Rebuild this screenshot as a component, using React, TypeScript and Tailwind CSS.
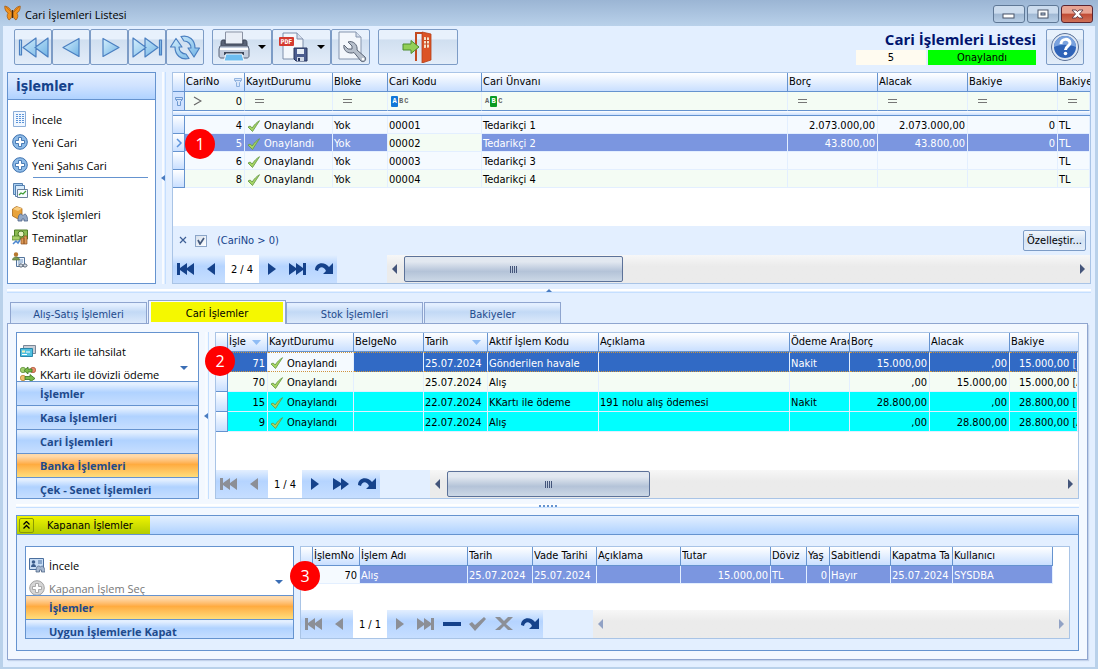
import type { ReactNode } from 'react'
import clsx from 'clsx'

interface Column {
  title: string
  width: string
  right?: boolean
  indent?: boolean
  sort?: boolean
  filter?: ReactNode
}

interface Row {
  cells: string[]
  tone: string
  current?: boolean
  cellTone?: Record<number, string>
}

const LIGHT = 'bg-[#f5faff] border-[#e3efff]'
const MINT = 'bg-[#f4fcf4] border-[#e3efff]'
const SELECTED = 'bg-[#7b96e0] border-[#e3efff] text-white'
const FOCUSED = 'bg-[#316ac5] border-[#e3efff] text-white'
const CYAN = 'bg-[#00ffff] border-[#e3efff]'
const LIGHT_CELL = 'bg-[#f5faff] border-[#e3efff] text-black'
const MINT_CELL = 'bg-[#f4fcf4] border-[#e3efff] text-black'

const equals = (
  <svg width="9" height="5" viewBox="0 0 9 5" className="ml-2">
    <path d="M0 .5h9M0 3.500h9" stroke="#777" />
  </svg>
)

const accountColumns: Column[] = [
  { title: 'CariNo', width: 'w-[60px]', right: true, filter: <GreaterThan /> },
  { title: 'KayıtDurumu', width: 'w-[88px]', filter: equals },
  { title: 'Bloke', width: 'w-[55px]', filter: equals },
  { title: 'Cari Kodu', width: 'w-[94px]', filter: <AbcBadge mark={0} /> },
  { title: 'Cari Ünvanı', width: '', filter: <AbcBadge mark={1} /> },
  { title: 'Borç', width: 'w-[90px]', right: true, filter: equals },
  { title: 'Alacak', width: 'w-[90px]', right: true, filter: equals },
  { title: 'Bakiye', width: 'w-[90px]', right: true, filter: equals },
  { title: 'Bakiye', width: 'w-8', filter: equals },
]

const accountRows: Row[] = [
  { tone: LIGHT, cells: ['4', 'Onaylandı', 'Yok', '00001', 'Tedarikçi 1', '2.073.000,00', '2.073.000,00', '0', 'TL'] },
  {
    tone: SELECTED,
    current: true,
    cellTone: { 3: MINT_CELL },
    cells: ['5', 'Onaylandı', 'Yok', '00002', 'Tedarikçi 2', '43.800,00', '43.800,00', '0', 'TL'],
  },
  { tone: LIGHT, cells: ['6', 'Onaylandı', 'Yok', '00003', 'Tedarikçi 3', '', '', '', 'TL'] },
  { tone: MINT, cells: ['8', 'Onaylandı', 'Yok', '00004', 'Tedarikçi 4', '', '', '', 'TL'] },
]

const movementColumns: Column[] = [
  { title: 'İşle', width: 'w-[40px]', right: true, sort: true },
  { title: 'KayıtDurumu', width: 'w-[86px]' },
  { title: 'BelgeNo', width: 'w-[70px]' },
  { title: 'Tarih', width: 'w-[64px]', sort: true },
  { title: 'Aktif İşlem Kodu', width: 'w-[111px]' },
  { title: 'Açıklama', width: '' },
  { title: 'Ödeme Arac', width: 'w-[60px]' },
  { title: 'Borç', width: 'w-[80px]', right: true },
  { title: 'Alacak', width: 'w-[80px]', right: true },
  { title: 'Bakiye', width: 'w-[68px]', indent: true },
]

const movementRows: Row[] = [
  {
    tone: FOCUSED,
    cellTone: { 1: LIGHT_CELL },
    cells: ['71', 'Onaylandı', '', '25.07.2024', 'Gönderilen havale', '', 'Nakit', '15.000,00', ',00', '15.000,00 [B'],
  },
  { tone: MINT, cells: ['70', 'Onaylandı', '', '25.07.2024', 'Alış', '', '', ',00', '15.000,00', '15.000,00 [A'] },
  { tone: CYAN, cells: ['15', 'Onaylandı', '', '22.07.2024', 'KKartı ile ödeme', '191 nolu alış ödemesi', 'Nakit', '28.800,00', ',00', '28.800,00 [B'] },
  { tone: CYAN, cells: ['9', 'Onaylandı', '', '22.07.2024', 'Alış', '', '', ',00', '28.800,00', '28.800,00 [A'] },
]

const closedColumns: Column[] = [
  { title: 'İşlemNo', width: 'w-[47px]', right: true },
  { title: 'İşlem Adı', width: 'w-[108px]' },
  { title: 'Tarih', width: 'w-[65px]' },
  { title: 'Vade Tarihi', width: 'w-[64px]' },
  { title: 'Açıklama', width: 'w-[84px]' },
  { title: 'Tutar', width: 'w-[90px]', right: true },
  { title: 'Döviz', width: 'w-[36px]' },
  { title: 'Yaş', width: 'w-[23px]', right: true },
  { title: 'Sabitlendi', width: 'w-[61px]' },
  { title: 'Kapatma Ta', width: 'w-[62px]' },
  { title: 'Kullanıcı', width: 'w-[100px]' },
]

const closedRows: Row[] = [
  {
    tone: SELECTED,
    cellTone: { 0: LIGHT_CELL },
    cells: ['70', 'Alış', '25.07.2024', '25.07.2024', '', '15.000,00', 'TL', '0', 'Hayır', '25.07.2024', 'SYSDBA'],
  },
]

export default function App() {
  return (
    <div className="flex min-h-screen flex-col overflow-hidden bg-[#b9d1ea] font-['DejaVu_Sans_Condensed','DejaVu_Sans',sans-serif] text-[11px] leading-none text-black">
      <TitleBar />
      <main className="mx-[3px] mb-[2px] flex flex-1 flex-col bg-[#e3efff]">
        <Toolbar />
        <section className="relative flex px-1">
          <ActionPanel />
          <VerticalSplitter className="w-4" />
          <div className="flex min-w-0 flex-1 flex-col border border-[#a9c4e6] bg-white">
            <DataGrid columns={accountColumns} rows={accountRows} rowHeight="h-[18px]" filterRow />
            <div className="min-h-[38px] flex-1" />
            <FilterPanel />
            <GridFooter label="2 / 4" atStart={false} thumb="w-[219px]" />
          </div>
          <StepBadge number={1} className="left-[182px] top-[57px]" />
        </section>
        <HorizontalSplitter className="mx-1 h-4 pt-[5px]" arrow />
        <Tabs />
        <section className="relative mr-[7px] mb-[7px] ml-1 flex flex-1 flex-col border border-t-0 border-[#8fa5cf] bg-[#f3f8ff] px-2 pt-2 pb-2 shadow-[1px_1px_1px_#c3d2ea]">
          <div className="relative flex">
            <BankPanel />
            <VerticalSplitter className="w-4" />
            <div className="flex min-w-0 flex-1 flex-col border border-[#a9c4e6] bg-white">
              <DataGrid columns={movementColumns} rows={movementRows} rowHeight="h-[20px]" dottedFirst />
              <div className="min-h-[38px] flex-1" />
              <GridFooter label="1 / 4" atStart thumb="w-[203px]" fast />
            </div>
            <StepBadge number={2} className="left-[189px] top-[14px]" />
          </div>
          <HorizontalSplitter className="h-4 pt-[5px]" />
          <ClosedPanel />
        </section>
      </main>
    </div>
  )
}

function TitleBar() {
  return (
    <header className="flex h-[26px] items-center bg-linear-to-b from-[#9bb5d4] to-[#b9d1ea] pl-1 pr-[5px]">
      <Butterfly />
      <h1 className="ml-[4px] flex-1 pt-[3px] font-['Open_Sans',sans-serif] text-[11px]">Cari İşlemleri Listesi</h1>
      <div className="flex gap-[2px] pt-[2px]">
        <WindowButton label="Simge durumuna küçült">
          <rect x="9" y="8" width="11" height="4" fill="#fff" stroke="#4a5468" />
        </WindowButton>
        <WindowButton label="Ekranı kapla">
          <rect x="10" y="4" width="10" height="8" fill="#fff" stroke="#4a5468" />
          <rect x="13" y="7" width="4" height="2" fill="#b3c6de" stroke="#4a5468" />
        </WindowButton>
        <WindowButton label="Kapat" close>
          <path d="M10 4h4l1.500 1.700L17 4h4l-3.500 4 3.500 4h-4l-1.500-1.700L14 12h-4l3.500-4z" fill="#fff" stroke="#5c3a44" strokeWidth=".9" />
        </WindowButton>
      </div>
    </header>
  )
}

function WindowButton({ label, close, children }: { label: string; close?: boolean; children: ReactNode }) {
  return (
    <button
      aria-label={label}
      className={clsx(
        'h-[18px] w-8 rounded-[3px] border',
        close
          ? 'border-[#5b2430] bg-linear-to-b from-[#e8a493] from-45% via-[#c04a34] via-50% to-[#cf7058]'
          : 'border-[#5f7896] bg-linear-to-b from-[#ccdcee] from-45% via-[#a0b8d3] via-50% to-[#b8cee6]',
      )}
    >
      <svg width="30" height="16" viewBox="0 0 30 16">{children}</svg>
    </button>
  )
}

function Toolbar() {
  return (
    <div className="flex items-start pt-[3px] pr-[11px] pb-[7px] pl-[11px]">
      <div className="flex">
        <ToolButton label="İlk kayıt" width="w-[38px]">
          <BlueShape d="M2.500 8h2v15h-2zM19 6v19L6 15.500zM31 6v19l-13-9.500z" />
        </ToolButton>
        <ToolButton label="Önceki kayıt" width="w-[38px]">
          <BlueShape d="M24 6.500v18L8 15.500z" />
        </ToolButton>
        <ToolButton label="Sonraki kayıt" width="w-[38px]">
          <BlueShape d="M10 6.500v18l16-9z" />
        </ToolButton>
        <ToolButton label="Son kayıt" width="w-[38px]">
          <BlueShape d="M28.500 8h2v15h-2zM14 6v19l13-9.500zM2 6v19l13-9.500z" />
        </ToolButton>
        <ToolButton label="Yenile" width="w-[38px]">
          <BlueShape d="M6 15H1.500L7 6.500 13 15H10c0 4 3 7 7 7l3 4.500C12 28.500 6 23 6 15zM26 16h4.500L25 25l-6-9h3c0-4-3-7-7-7l-3-4.500C20 2.500 26 8 26 16z" />
        </ToolButton>
      </div>
      <div className="ml-2 flex">
        <ToolButton label="Yazdır" width="w-[60px]" menu>
          <PrinterIcon />
        </ToolButton>
        <ToolButton label="PDF olarak kaydet" width="w-[59px]" menu>
          <PdfIcon />
        </ToolButton>
        <ToolButton label="Ayarlar" width="w-[39px]">
          <WrenchIcon />
        </ToolButton>
      </div>
      <div className="ml-2 flex flex-1">
        <ToolButton label="Çıkış" width="w-20">
          <DoorIcon />
        </ToolButton>
      </div>
      <div className="mr-[10px] w-[180px]">
        <h2 className="-ml-2 h-[21px] text-right font-['Open_Sans',sans-serif] text-[15px] leading-[20px] font-bold whitespace-nowrap text-[#00146e]">
          Cari İşlemleri Listesi
        </h2>
        <div className="flex h-[15px] gap-[2px] text-center leading-[16px]">
          <div className="w-[70px] bg-[#fffbf0]">5</div>
          <div className="flex-1 bg-[#00ff00]">Onaylandı</div>
        </div>
      </div>
      <ToolButton label="Yardım" width="w-[38px]">
        <HelpIcon />
      </ToolButton>
    </div>
  )
}

function ToolButton({ label, width, menu, children }: { label: string; width: string; menu?: boolean; children: ReactNode }) {
  return (
    <button
      aria-label={label}
      className={clsx(
        'flex h-9 items-center justify-center rounded-[2px] border border-[#7d9cc6] bg-linear-to-b from-[#e8f1fc] from-25% via-[#d0dff0] via-30% to-[#e3edf9]',
        width,
      )}
    >
      {children}
      {menu && (
        <svg width="8" height="4" viewBox="0 0 8 4" className="ml-2">
          <path d="M0 0h8L4 4z" fill="#000" />
        </svg>
      )}
    </button>
  )
}

function ActionPanel() {
  return (
    <aside className="flex w-[149px] shrink-0 flex-col border border-[#6593cf] bg-white">
      <h3 className="flex h-[27px] items-center border-b border-[#6593cf] bg-linear-to-b from-[#e3efff] via-[#cfe2ff] to-[#afd2ff] pl-2 text-[14px] font-bold text-[#15428b]">
        İşlemler
      </h3>
      <nav className="flex flex-col px-1 pt-[7px] font-['Open_Sans',sans-serif]">
        <ActionItem icon={<ListIcon />}>İncele</ActionItem>
        <ActionItem icon={<PlusIcon />}>Yeni Cari</ActionItem>
        <ActionItem icon={<PlusIcon />}>Yeni Şahıs Cari</ActionItem>
        <hr className="mt-[1px] mr-[3px] mb-[1px] ml-[21px] border-[#6593cf]" />
        <ActionItem icon={<RiskIcon />}>Risk Limiti</ActionItem>
        <ActionItem icon={<StockIcon />}>Stok İşlemleri</ActionItem>
        <ActionItem icon={<MoneyIcon />}>Teminatlar</ActionItem>
        <ActionItem icon={<LinkIcon />}>Bağlantılar</ActionItem>
      </nav>
    </aside>
  )
}

function ActionItem({ icon, disabled, children }: { icon: ReactNode; disabled?: boolean; children: ReactNode }) {
  return (
    <button disabled={disabled} className={clsx('flex h-[23px] shrink-0 items-center gap-1 whitespace-nowrap', disabled && 'text-[#777]')}>
      {icon}
      <span className="pt-[2px]">{children}</span>
    </button>
  )
}

function BankPanel() {
  return (
    <aside className="relative flex w-[183px] shrink-0 flex-col border border-[#6593cf] bg-white">
      <div className="flex h-12 flex-col overflow-hidden pt-[6px] pl-[3px] font-['Open_Sans',sans-serif]">
        <ActionItem icon={<CardsIcon />}>KKartı ile tahsilat</ActionItem>
        <ActionItem icon={<SwapIcon />}>KKartı ile dövizli ödeme</ActionItem>
      </div>
      <MoreArrow className="top-[33px] right-[10px]" />
      <NavGroup>İşlemler</NavGroup>
      <NavGroup>Kasa İşlemleri</NavGroup>
      <NavGroup>Cari İşlemleri</NavGroup>
      <NavGroup active>Banka İşlemleri</NavGroup>
      <NavGroup last>Çek - Senet İşlemleri</NavGroup>
    </aside>
  )
}

function NavGroup({ active, last, children }: { active?: boolean; last?: boolean; children: ReactNode }) {
  return (
    <button
      className={clsx(
        "flex items-start border-t border-[#6593cf] pt-[5px] pl-[23px] text-left font-['Open_Sans',sans-serif] leading-[13px] font-bold text-[#1e4a8c]",
        last ? 'h-[19px] grow' : 'h-6',
        active
          ? 'bg-linear-to-b from-[#ffd9a8] from-10% via-[#ffab3f] via-45% to-[#ffdd7a]'
          : 'bg-linear-to-b from-[#e3efff] from-10% via-[#b0d2ff] via-45% to-[#c6deff]',
      )}
    >
      {children}
    </button>
  )
}

function MoreArrow({ className }: { className: string }) {
  return (
    <svg width="8" height="4" viewBox="0 0 8 4" className={clsx('absolute', className)}>
      <path d="M0 0h8L4 4z" fill="#3a6eb5" />
    </svg>
  )
}

function DataGrid({ columns, rows, rowHeight, filterRow, dottedFirst, trailing }: {
  columns: Column[]
  rows: Row[]
  rowHeight: string
  filterRow?: boolean
  dottedFirst?: boolean
  trailing?: boolean
}) {
  return (
    <table className="w-full table-fixed border-separate border-spacing-0 text-left">
      <thead>
        <tr>
          <th className="h-[19px] w-3 border-r border-b border-[#6593cf] bg-linear-to-b from-white to-[#c9dfff] p-0" />
          {columns.map((column, i) => (
            <th
              key={i}
              className={clsx(
                'overflow-hidden border-r border-b border-[#6593cf] bg-linear-to-b from-white to-[#c9dfff] p-0 pl-[1px] font-normal whitespace-nowrap',
                column.width,
                !trailing && i === columns.length - 1 && 'border-r-0',
              )}
            >
              <div className="flex items-center justify-between overflow-hidden leading-[14px]">
                {column.title}
                {column.sort && (
                  <svg width="9" height="5" viewBox="0 0 9 5" className="mr-[6px] shrink-0">
                    <path d="M0 0h9L4.500 5z" fill="#8fbcf5" />
                  </svg>
                )}
                {filterRow && i === 0 && <Funnel className="mr-[2px] opacity-70" />}
              </div>
            </th>
          ))}
          {trailing && <th className="p-0" />}
        </tr>
      </thead>
      <tbody>
        {filterRow && (
          <>
            <tr>
              <td className="h-[19px] border-r border-b border-[#6593cf] bg-[#cfe2ff] p-0 pl-[2px]">
                <Funnel />
              </td>
              {columns.map((column, i) => (
                <td key={i} className="border-r border-b border-r-[#e3efff] border-b-[#6593cf] bg-[#f4fcf4] p-0 pl-[2px]">
                  {column.filter}
                </td>
              ))}
            </tr>
            <tr>
              <td className="h-[5px] border-b border-[#6593cf] bg-linear-to-b from-white to-[#c9dfff] p-0" colSpan={columns.length + 1} />
            </tr>
          </>
        )}
        {rows.map((row, r) => (
          <tr key={r}>
            <td className={clsx('border-r border-b border-[#6593cf] bg-linear-to-b from-white to-[#c9dfff] p-0', rowHeight)}>
              {row.current && (
                <svg width="11" height="10" viewBox="0 0 11 10">
                  <path d="M4 1l4 4-4 4" fill="none" stroke="#5b93dc" strokeWidth="1.500" />
                </svg>
              )}
            </td>
            {row.cells.map((cell, i) => (
              <td
                key={i}
                className={clsx(
                  'overflow-hidden border-r border-b p-0 pt-[2px] pr-[2px] whitespace-nowrap',
                  columns[i].indent ? 'pl-[9px]' : 'pl-[1px]',
                  row.cellTone?.[i] ?? row.tone,
                  columns[i].right && 'text-right',
                  dottedFirst && r === 0 && 'border-t border-t-[#ce953a] border-b-[#ce953a] [border-top-style:dotted] [border-bottom-style:dotted]',
                )}
              >
                {columns[i].title === 'KayıtDurumu' ? (
                  <span className="flex items-center gap-[3px]">
                    <CheckIcon />
                    {cell}
                  </span>
                ) : (
                  cell
                )}
              </td>
            ))}
            {trailing && <td className="p-0" />}
          </tr>
        ))}
      </tbody>
    </table>
  )
}

function FilterPanel() {
  return (
    <div className="flex h-[29px] items-center bg-[#e3efff] pr-1 pl-[6px] text-[#15428b]">
      <button aria-label="Filtreyi kaldır">
        <svg width="9" height="9" viewBox="0 0 9 9">
          <path d="M1 1l6 6M7 1L1 7" stroke="#3d5f96" strokeWidth="1.200" />
        </svg>
      </button>
      <label className="flex items-center gap-[10px] pl-[7px]">
        <input
          type="checkbox"
          defaultChecked
          className="peer h-3 w-3 appearance-none border border-[#8ba5c8] bg-[linear-gradient(135deg,#d5dfec,#ffffff)]"
        />
        <svg width="8" height="8" viewBox="0 0 8 8" className="-ml-5 mr-[2px] hidden peer-checked:block">
          <path d="M1 3l2 4 4-6" fill="none" stroke="#44597c" strokeWidth="1.700" />
        </svg>
        (CariNo &gt; 0)
      </label>
      <div className="flex-1" />
      <button className="h-[21px] rounded-[2px] border border-[#7d9cc6] bg-linear-to-b from-[#f2f7fd] via-[#d5e3f4] to-[#e3edf9] px-[3px] text-black">
        Özelleştir...
      </button>
    </div>
  )
}

function GridFooter({ label, atStart, atEnd, thumb, fast, editing }: {
  label: string
  atStart: boolean
  atEnd?: boolean
  thumb?: string
  fast?: boolean
  editing?: boolean
}) {
  return (
    <div className="flex h-7 bg-[#e3efff]">
      <div className="flex bg-linear-to-b from-[#e3efff] from-0% via-[#b5d4ff] via-40% to-[#c6deff]">
        <NavButton label="İlk" disabled={atStart} d="M0 2h3v5l7-5v5l7-5v12l-7-5v5L3 9v5H0z" />
        <NavButton label="Önceki" disabled={atStart} d="M12 2v12L4 8z" />
        <div className="flex w-[34px] items-center justify-center bg-white">{label}</div>
        <NavButton label="Sonraki" disabled={atEnd} d="M5 2v12l8-6z" />
        <NavButton
          label="Son"
          disabled={atEnd}
          d={fast ? 'M1 2v12l8-5v5l8-6-8-6v5z' : 'M0 2v12l7-5v5l7-5v5h3V2h-3v5L7 2v5z'}
        />
        {editing && (
          <>
            <NavButton label="Sil" d="M0 6h18v4H0z" />
            <NavButton label="Kaydet" disabled d="M0 8l3-2 3 3L15 1l2 2L6 15z" />
            <NavButton label="Vazgeç" disabled d="M0 1h5l4 4 4-4h5l-7 7 7 6h-5l-4-4-4 4H0l7-6z" />
          </>
        )}
        <NavButton label="Yenile" d="M0 9C0 1 10 0 14 6l4-4v11H8l3-3C9 5 4 5 3 10z" />
      </div>
      <div className="w-[50px] shrink-0" />
      <div className="flex min-w-0 flex-1 items-center bg-linear-to-b from-[#f7f7f7] to-[#ebebeb] to-40% px-1">
        <svg width="6" height="10" viewBox="0 0 6 10" className="shrink-0">
          <path d="M6 0v10L1 5z" fill={thumb ? '#44557a' : '#91a2c5'} />
        </svg>
        {thumb && (
          <div
            className={clsx(
              'ml-[7px] flex h-[26px] items-center justify-center gap-[1px] rounded-[2px] border border-[#5c7299] bg-linear-to-b from-[#e2e8f0] from-20% via-[#b4c3d8] via-60% to-[#ccd8e6]',
              thumb,
            )}
          >
            <i className="h-[7px] w-px bg-[#44557a]" />
            <i className="h-[7px] w-px bg-[#44557a]" />
            <i className="h-[7px] w-px bg-[#44557a]" />
            <i className="h-[7px] w-px bg-[#44557a]" />
          </div>
        )}
        <div className="flex-1" />
        <svg width="6" height="10" viewBox="0 0 6 10" className="shrink-0">
          <path d="M0 0v10l5-5z" fill={thumb ? '#44557a' : '#91a2c5'} />
        </svg>
      </div>
    </div>
  )
}

function NavButton({ label, disabled, d }: { label: string; disabled?: boolean; d: string }) {
  return (
    <button aria-label={label} disabled={disabled} className="flex w-[26px] items-center justify-center">
      <svg width="18" height="16" viewBox="0 0 18 16">
        <path d={d} fill={disabled ? '#8c8f96' : '#15428b'} />
      </svg>
    </button>
  )
}

function Tabs() {
  return (
    <div className="mr-[7px] ml-1 flex items-end">
      <div className="w-[3px] self-stretch border-b border-[#8fa5cf]" />
      <Tab>Alış-Satış İşlemleri</Tab>
      <Tab active>Cari İşlemler</Tab>
      <Tab>Stok İşlemleri</Tab>
      <Tab>Bakiyeler</Tab>
      <div className="flex-1 border-b border-[#8fa5cf]" />
    </div>
  )
}

function Tab({ active, children }: { active?: boolean; children: ReactNode }) {
  if (active) {
    return (
      <div className="h-6 border border-b-0 border-[#8fa5cf] bg-[#f3f8ff] px-[2px] pt-[1px]">
        <button className="h-5 w-[132px] bg-[#f5f800] pt-[2px]">{children}</button>
      </div>
    )
  }
  return (
    <div className="h-[22px] border-b border-[#8fa5cf] pr-[1px]">
      <button className="h-[21px] w-[137px] border border-b-0 border-[#8fa5cf] bg-linear-to-b from-[#e3efff] from-10% via-[#c2d9f5] via-45% to-[#dce9fb] pt-[2px] text-[#1e4a8c]">
        {children}
      </button>
    </div>
  )
}

function ClosedPanel() {
  return (
    <section className="relative flex flex-1 flex-col border border-[#6593cf] bg-[#e3efff]">
      <header className="flex h-[19px] border-b border-[#6593cf] bg-linear-to-b from-[#e3efff] to-[#afd2ff]">
        <div className="flex w-[133px] items-center bg-linear-to-b from-[#f0f400] to-[#b3cc00] pl-[2px]">
          <button aria-label="Daralt" className="flex h-[15px] w-[15px] items-center justify-center rounded-[2px] border border-[#8a9a00]">
            <svg width="7" height="8" viewBox="0 0 7 8">
              <path d="M.5 3.500l3-3 3 3M.5 7.500l3-3 3 3" fill="none" stroke="#000" strokeWidth="1.300" />
            </svg>
          </button>
          <span className="pl-[13px]">Kapanan İşlemler</span>
        </div>
      </header>
      <div className="flex flex-1 px-2 py-[11px]">
        <aside className="relative flex w-[269px] shrink-0 flex-col border border-[#6593cf] bg-white">
          <div className="flex h-12 flex-col overflow-hidden pt-[6px] pl-[3px] font-['Open_Sans',sans-serif]">
            <ActionItem icon={<CustomerIcon />}>İncele</ActionItem>
            <ActionItem icon={<PlusIcon muted />} disabled>Kapanan İşlem Seç</ActionItem>
          </div>
          <MoreArrow className="top-[33px] right-[10px]" />
          <NavGroup active>İşlemler</NavGroup>
          <NavGroup last>Uygun İşlemlerle Kapat</NavGroup>
        </aside>
        <div className="ml-[6px] flex min-w-0 flex-1 flex-col border border-[#a9c4e6] bg-white">
          <DataGrid columns={closedColumns} rows={closedRows} rowHeight="h-[18px]" trailing />
          <div className="flex-1" />
          <GridFooter label="1 / 1" atStart atEnd editing />
        </div>
      </div>
      <StepBadge number={3} className="left-[273px] top-[45px]" />
    </section>
  )
}

function VerticalSplitter({ className }: { className: string }) {
  return (
    <div className={clsx('flex shrink-0 items-center justify-center', className)}>
      <div className="flex h-full w-1 items-center justify-end border-r border-l-2 border-r-[#c5dfff] border-l-[#f8fbff]">
        <svg width="4" height="6" viewBox="0 0 4 6" className="shrink-0">
          <path d="M4 0v6L0 3z" fill="#4a7cc0" />
        </svg>
      </div>
    </div>
  )
}

function HorizontalSplitter({ className, arrow }: { className: string; arrow?: boolean }) {
  return (
    <div className={className}>
      <div className="flex h-1 items-end justify-center gap-[2px] border-t-2 border-b border-t-white border-b-[#c5dfff]">
        {arrow ? (
          <svg width="6" height="3" viewBox="0 0 6 3" className="shrink-0">
            <path d="M0 3h6L3 0z" fill="#4a7cc0" />
          </svg>
        ) : (
          [0, 1, 2, 3, 4].map(i => <i key={i} className="h-[2px] w-[2px] shrink-0 bg-[#6593cf]" />)
        )}
      </div>
    </div>
  )
}

function StepBadge({ number, className }: { number: number; className: string }) {
  return (
    <span
      className={clsx(
        "absolute flex h-[30px] w-[30px] items-center justify-center rounded-full bg-[#ff0000] font-['Open_Sans',sans-serif] text-base text-white",
        className,
      )}
    >
      {number}
    </span>
  )
}

function GreaterThan() {
  return (
    <div className="flex items-center justify-between pr-[2px] pl-[6px]">
      <svg width="9" height="10" viewBox="0 0 9 10">
        <path d="M1 1l7 4-7 4" fill="none" stroke="#666" strokeWidth="1.200" />
      </svg>
      0
    </div>
  )
}

function AbcBadge({ mark }: { mark: number }) {
  return (
    <span className="flex items-center gap-[1px] pl-[1px] font-['Liberation_Mono',monospace] text-[7px] font-bold text-[#666]">
      {['A', 'B', 'C'].map((letter, i) => (
        <span
          key={letter}
          className={clsx(i === mark && 'flex h-[11px] w-[7px] items-center justify-center rounded-[1px] text-white', i === mark && (mark === 0 ? 'bg-[#1277d8]' : 'bg-[#0a9b22]'))}
        >
          {letter}
        </span>
      ))}
    </span>
  )
}

function Funnel({ className }: { className?: string }) {
  return (
    <svg width="8" height="9" viewBox="0 0 8 9" className={className}>
      <path d="M.5 .5h7v2l-2 2v4h-3v-4l-2-2z" fill="#d5e4fa" stroke="#6f9ad2" />
      <path d="M1 2.500h6" stroke="#6f9ad2" />
    </svg>
  )
}

function CheckIcon() {
  return (
    <svg width="14" height="12" viewBox="0 0 14 12" className="ml-[1px] shrink-0">
      <path d="M1 7l2.200-1L5.200 8C7 5 9.500 2.500 12.500 .7 10.500 4 8 7.500 5.500 11.500z" fill="#a5d564" stroke="#6b9c48" strokeWidth=".9" strokeLinejoin="round" />
    </svg>
  )
}

function BlueShape({ d }: { d: string }) {
  return (
    <svg width="32" height="30" viewBox="0 0 32 30">
      <defs>
        <linearGradient id="blueGlass" x1="0" y1="0" x2="1" y2="1">
          <stop offset="0" stopColor="#d6f0fd" />
          <stop offset="1" stopColor="#6fb2e4" />
        </linearGradient>
      </defs>
      <path d={d} fill="url(#blueGlass)" stroke="#4a7fc0" strokeWidth="1.200" strokeLinejoin="round" />
    </svg>
  )
}

function Butterfly() {
  return (
    <svg width="17" height="16" viewBox="0 0 17 16">
      <path d="M8 8C7 4 4 1.500 .8 1c-.3 3 1 6 3.400 7C2.500 10 3 13 5 15c2-1 3-3 3-6zM9 8c1-4 4-6.500 7.200-7 .3 3-1 6-3.400 7 1.700 2 1.200 5-.8 7-2-1-3-3-3-6z" fill="#f2931d" stroke="#9c5510" strokeWidth=".7" />
      <path d="M2 2l5 5M15 2l-5 5" stroke="#c46a10" strokeWidth=".8" />
      <path d="M8.500 5v8" stroke="#4a2a0a" strokeWidth="1.200" />
    </svg>
  )
}

function PrinterIcon() {
  return (
    <svg width="32" height="32" viewBox="0 0 32 32">
      <path d="M7.500 1h17v14h-17z" fill="#e9eef6" stroke="#8b93a5" />
      <path d="M5 9c-2 0-2 2-2 4v2h26v-2c0-2 0-4-2-4h-2v4H7V9z" fill="#596377" stroke="#3c4456" />
      <path d="M2 15h28l1 3v7c0 1-1 2-2 2H3c-1 0-2-1-2-2v-7z" fill="#c3cddd" stroke="#596377" />
      <path d="M2 17h28v2H2z" fill="#fff" />
      <path d="M6 21h20v3H6z" fill="#3f485b" />
      <path d="M8 23h16l2 7H6z" fill="#6cbdf0" stroke="#f5f8fc" />
    </svg>
  )
}

function PdfIcon() {
  return (
    <svg width="31" height="32" viewBox="0 0 31 32">
      <path d="M5 2h14l6 6v20H5z" fill="#f3f7fc" stroke="#7f8fab" />
      <path d="M19 2v6h6" fill="#d5deeb" stroke="#7f8fab" />
      <rect x="1" y="6" width="15" height="9" rx="1" fill="#d43a2f" />
      <text x="2.500" y="13" fontSize="6.500" fontWeight="bold" fill="#fff" fontFamily="DejaVu Sans Mono">PDF</text>
      <path d="M16 17h13v13H18l-2-2z" fill="#4b5c8e" stroke="#27355c" />
      <path d="M19 18h7v5h-7z" fill="#e5ecf5" />
      <path d="M19 26h7v4h-7z" fill="#cfd8e6" />
      <path d="M20 27h2v3h-2z" fill="#27355c" />
    </svg>
  )
}

function WrenchIcon() {
  return (
    <svg width="32" height="32" viewBox="0 0 32 32">
      <path d="M4 1h17l5 5v22H4z" fill="#f3f7fc" stroke="#8595ae" />
      <path d="M21 1v5h5" fill="#d5deeb" stroke="#8595ae" />
      <path d="M13 11l4 4v3h-4l-4-4c-1 4 2 8 7 8 1 0 2 0 3-.5L26 30c3 2 6-1 4-4l-8-7c1-5-4-10-9-8z" fill="#b6bfcb" stroke="#5b6576" />
      <circle cx="28" cy="28" r="1.200" fill="#fff" />
    </svg>
  )
}

function DoorIcon() {
  return (
    <svg width="32" height="32" viewBox="0 0 32 32">
      <path d="M14 30V2h7" fill="none" stroke="#c24a20" strokeWidth="2" />
      <path d="M20 1l9 2v26l-9 3z" fill="#dc5425" stroke="#b53f16" strokeWidth=".8" />
      <path d="M22 6l5 .5v10l-5 .5z" fill="#f5e2c8" />
      <path d="M24.500 6v11M22 9.500h5M22 13h5" stroke="#c24a20" />
      <path d="M1 13h8V9.500l8 6.500-8 6.500V19H1z" fill="#92cf57" stroke="#4d8d2e" />
    </svg>
  )
}

function HelpIcon() {
  return (
    <svg width="32" height="32" viewBox="0 0 32 32">
      <circle cx="16" cy="16" r="13.500" fill="#2f63b8" stroke="#5f7191" />
      <circle cx="16" cy="16" r="12" fill="none" stroke="#dfe7f2" strokeWidth="2" />
      <path d="M5 16a11 11 0 0 1 22 0c-7-3-15-3-22 0z" fill="#7aa2de" />
      <path d="M12 13c0-6 9-6 9-1 0 3-4.500 3.500-4.500 7" fill="none" stroke="#fff" strokeWidth="3" />
      <circle cx="16.500" cy="22.500" r="1.800" fill="#fff" />
    </svg>
  )
}

function ListIcon() {
  return (
    <svg width="16" height="16" viewBox="0 0 16 16">
      <path d="M1.500 .5h12v15h-12z" fill="#f0f7ff" stroke="#8caed8" />
      <path d="M4 3.500h2m1 0h2m1 0h2M4 5.500h2m1 0h2m1 0h2M4 7.500h2m1 0h2m1 0h2M4 9.500h2m1 0h2m1 0h2M4 11.500h2m1 0h2m1 0h2" stroke="#5c94d8" />
    </svg>
  )
}

function PlusIcon({ muted }: { muted?: boolean }) {
  return (
    <svg width="16" height="16" viewBox="0 0 16 16">
      <circle cx="8" cy="8" r="7.300" fill={muted ? '#d5d5d5' : '#8fbce8'} stroke={muted ? '#a3a3a3' : '#3c70ae'} />
      <path d="M6.500 3.500h3v3h3v3h-3v3h-3v-3h-3v-3h3z" fill="#fff" stroke={muted ? '#a3a3a3' : '#3c70ae'} strokeWidth=".9" />
    </svg>
  )
}

function RiskIcon() {
  return (
    <svg width="16" height="16" viewBox="0 0 16 16">
      <path d="M1.500 .5h9v11h-9z" fill="#a9cff2" stroke="#5580b0" />
      <path d="M3.500 2.500h9v11h-9z" fill="#d9ecfc" stroke="#5580b0" />
      <path d="M5.500 6.500h10v8h-10z" fill="#f7fbff" stroke="#6b7f9a" />
      <path d="M7 12l2-2 2 1 3-3" fill="none" stroke="#3f9c35" strokeWidth="1.200" />
    </svg>
  )
}

function StockIcon() {
  return (
    <svg width="16" height="16" viewBox="0 0 16 16">
      <path d="M.5 3l4-2.500L10 2.500v8L6 13l-5.500-3z" fill="#e8a33c" stroke="#a86a1c" strokeWidth=".8" />
      <path d="M1 3l5 2 4-2.500-5-1.800z" fill="#f8cd82" />
      <path d="M6 15c0-4 1-7 2.500-7s2 1.500 2.500 1.500S12 8 13 8s2.700 3 2.700 7H12v-2h-2v2z" fill="#93a8c6" stroke="#4b6288" strokeWidth=".8" />
    </svg>
  )
}

function MoneyIcon() {
  return (
    <svg width="16" height="16" viewBox="0 0 16 16">
      <path d="M2.500 1h13v9h-13z" fill="#8cbc52" stroke="#4e7c26" />
      <circle cx="9" cy="5" r="3" fill="#e5f2bf" stroke="#4e7c26" />
      <path d="M0 7h8v4H0z" fill="#a9d06a" stroke="#4e7c26" strokeWidth=".7" />
      <path d="M1 15l3-3 2 2 2-3" fill="none" stroke="#4c86cf" strokeWidth="1.500" />
      <path d="M9 9h3v6H9zM12 7h3v8h-3z" fill="#dc9a58" stroke="#8d5220" strokeWidth=".7" />
    </svg>
  )
}

function LinkIcon() {
  return (
    <svg width="16" height="16" viewBox="0 0 16 16">
      <path d="M4.500 5.500h8v9h-8z" fill="#eef5fd" stroke="#54749c" />
      <path d="M6 8h5M6 10h5M6 12h3" stroke="#6f92bd" />
      <circle cx="4" cy="2.500" r="2.200" fill="#b8782e" />
      <path d="M.5 8c0-4 7-4 7 0z" fill="#7c9c50" stroke="#4d6630" strokeWidth=".6" />
      <path d="M7 13.500c0-2 4-2 4 0s-4 2-4 0zM11 13.500c0-2 4-2 4 0s-4 2-4 0z" fill="#d5dce6" stroke="#56606e" />
    </svg>
  )
}

function CardsIcon() {
  return (
    <svg width="16" height="16" viewBox="0 0 16 16">
      <path d="M3.500 2.500h12v8h-12z" fill="#c9ced6" stroke="#7b8797" />
      <path d="M.5 5.500h12v8H.5z" fill="#4fc0e0" stroke="#2a87ab" />
      <path d="M2 7.500h3v2H2z" fill="#f4f0b8" />
      <path d="M6 9h4M2 11.500h5" stroke="#fff" />
    </svg>
  )
}

function SwapIcon() {
  return (
    <svg width="16" height="16" viewBox="0 0 16 16">
      <circle cx="3" cy="4" r="2.700" fill="#a2cf6e" stroke="#578b32" strokeWidth=".7" />
      <circle cx="13" cy="4" r="2.700" fill="#e58c6e" stroke="#b04f30" strokeWidth=".7" />
      <circle cx="3" cy="12" r="2.700" fill="#f0bf6c" stroke="#b27d28" strokeWidth=".7" />
      <path d="M12 3v3H8v2L4 4.500 8 1v2zM5 10.500h5v-2l5 4-5 3.500v-2.500H5z" fill="#79b846" stroke="#3d7521" strokeWidth=".8" />
    </svg>
  )
}

function CustomerIcon() {
  return (
    <svg width="16" height="16" viewBox="0 0 16 16">
      <path d="M.5 1.500h14v11H.5z" fill="#c9def5" stroke="#4b6f9e" />
      <circle cx="4.500" cy="5" r="1.800" fill="#3b5d8c" />
      <path d="M2 10c0-4 5-4 5 0z" fill="#3b5d8c" />
      <path d="M9 4h4M9 6h4" stroke="#4b6f9e" />
      <path d="M7 15c0-4 1-6 2.500-6S11 10 11.500 10 12 9 13 9s3 2 3 6h-3.500v-2h-2v2z" fill="#a6b8d0" stroke="#41597d" strokeWidth=".7" />
    </svg>
  )
}
